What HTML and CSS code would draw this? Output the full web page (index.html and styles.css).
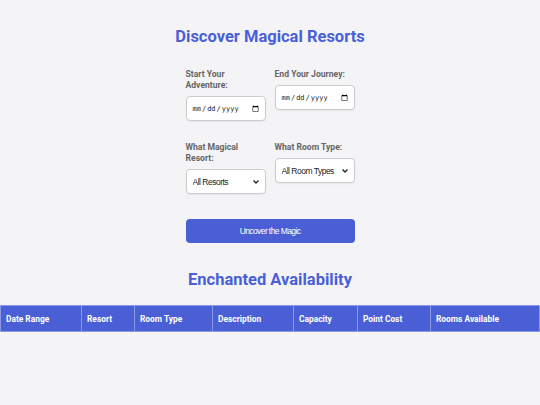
FILE: index.html
```html
<!DOCTYPE html>
<html>
<head>
<meta charset="utf-8">
<link rel="stylesheet" href="styles.css">
</head>
<body>
<h1 class="title">Discover Magical Resorts</h1>
<form class="search">
  <div class="field">
    <label class="lbl">Start Your Adventure:</label>
    <input class="ctl" type="date">
  </div>
  <div class="field">
    <label class="lbl">End Your Journey:</label>
    <input class="ctl" type="date">
  </div>
  <div class="field">
    <label class="lbl">What Magical Resort:</label>
    <div class="selwrap">
      <select class="ctl sel"><option>All Resorts</option></select>
      <svg class="chev" width="6" height="4" viewBox="0 0 6 4"><path d="M0.5 0.5 L3 3 L5.5 0.5" fill="none" stroke="#222" stroke-width="1.3"/></svg>
    </div>
  </div>
  <div class="field">
    <label class="lbl">What Room Type:</label>
    <div class="selwrap">
      <select class="ctl sel"><option>All Room Types</option></select>
      <svg class="chev" width="6" height="4" viewBox="0 0 6 4"><path d="M0.5 0.5 L3 3 L5.5 0.5" fill="none" stroke="#222" stroke-width="1.3"/></svg>
    </div>
  </div>
  <button class="go" type="button">Uncover the Magic</button>
</form>
<h2 class="subtitle">Enchanted Availability</h2>
<table class="results">
  <thead>
    <tr>
      <th class="c1">Date Range</th>
      <th class="c2">Resort</th>
      <th class="c3">Room Type</th>
      <th class="c4">Description</th>
      <th class="c5">Capacity</th>
      <th class="c6">Point Cost</th>
      <th class="c7">Rooms Available</th>
    </tr>
  </thead>
</table>
</body>
</html>
```
FILE: styles.css
```css
html, body {
  margin: 0;
  padding: 0;
  background: #f4f4f6;
}
body {
  font-family: Roboto, "DejaVu Sans", sans-serif;
  padding-top: 27px;
}
.title {
  margin: 0 0 22px;
  text-align: center;
  color: #4a5fd6;
  font-size: 16.5px;
  line-height: 20px;
  font-weight: bold;
}
.search {
  width: 169px;
  margin: 0 auto;
  display: grid;
  grid-template-columns: 80px 80px;
  column-gap: 9px;
  row-gap: 21px;
  align-items: start;
}
.field {
  display: flex;
  flex-direction: column;
}
.lbl {
  font-size: 8.6px;
  font-weight: bold;
  color: #666;
  line-height: 11px;
  margin-bottom: 5px;
}
.ctl {
  box-sizing: border-box;
  width: 80px;
  height: 25px;
  margin: 0;
  border: 1px solid #ccc;
  border-radius: 4px;
  background: #fff;
  color: #222;
  font-family: "DejaVu Sans Mono", monospace;
  font-size: 7px;
  padding: 0 4px 0 5px;
  box-shadow: 0 1px 2px rgba(0,0,0,0.06);
}
.selwrap {
  position: relative;
  width: 80px;
}
.sel {
  appearance: none;
  -webkit-appearance: none;
  display: block;
  font-family: "Liberation Sans", sans-serif;
  font-size: 8.5px;
  letter-spacing: -0.5px;
  padding-left: 6px;
}
.chev {
  position: absolute;
  right: 7px;
  top: 11px;
  pointer-events: none;
}
.go {
  grid-column: 1 / 3;
  height: 24px;
  margin-top: 4px;
  border: none;
  border-radius: 4px;
  background: #4a5fd6;
  color: #fff;
  font-family: "Liberation Sans", sans-serif;
  font-size: 8.5px;
  letter-spacing: -0.6px;
}
.subtitle {
  margin: 27px 0 15px;
  text-align: center;
  color: #4a5fd6;
  font-size: 16.5px;
  line-height: 20px;
  font-weight: bold;
}
.results {
  width: 100%;
  table-layout: fixed;
  border-collapse: collapse;
  box-shadow: 0 2px 4px rgba(0,0,0,0.08);
}
.results th {
  box-sizing: border-box;
  background: #4a5fd6;
  color: #fff;
  font-size: 8.4px;
  font-weight: bold;
  text-align: left;
  height: 26px;
  padding: 0 5px;
  border: 1px solid #8a98e6;
  white-space: nowrap;
}
.c1 { width: 81px; }
.c2 { width: 53px; }
.c3 { width: 78px; }
.c4 { width: 81px; }
.c5 { width: 64px; }
.c6 { width: 73px; }
```
